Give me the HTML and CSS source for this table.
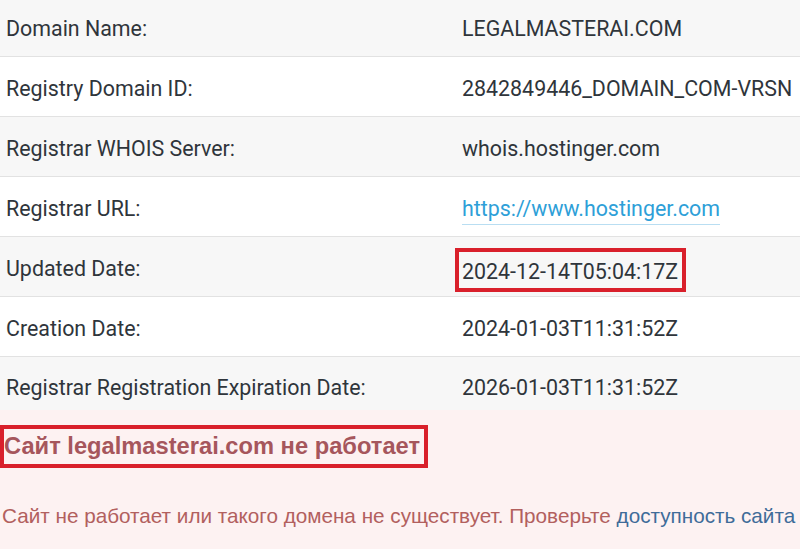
FILE: index.html
```html
<!DOCTYPE html>
<html>
<head>
<meta charset="utf-8">
<link rel="stylesheet" href="styles.css">
</head>
<body>
<div class="whois">
  <div class="row odd first"><div class="label">Domain Name:</div><div class="value">LEGALMASTERAI.COM</div></div>
  <div class="row"><div class="label">Registry Domain ID:</div><div class="value">2842849446_DOMAIN_COM-VRSN</div></div>
  <div class="row odd"><div class="label">Registrar WHOIS Server:</div><div class="value">whois.hostinger.com</div></div>
  <div class="row"><div class="label">Registrar URL:</div><div class="value"><a class="link" href="#">https://www.hostinger.com</a></div></div>
  <div class="row odd"><div class="label">Updated Date:</div><div class="value"><span class="mark">2024-12-14T05:04:17Z</span></div></div>
  <div class="row"><div class="label">Creation Date:</div><div class="value">2024-01-03T11:31:52Z</div></div>
  <div class="row odd last"><div class="label">Registrar Registration Expiration Date:</div><div class="value">2026-01-03T11:31:52Z</div></div>
</div>
<div class="status">
  <h2 class="status-title">Сайт legalmasterai.com не работает</h2>
  <p class="status-text">Сайт не работает или такого домена не существует. Проверьте <a class="check" href="#">доступность сайта</a></p>
</div>
</body>
</html>
```

FILE: styles.css
```css
* { box-sizing: border-box; }
html, body { margin: 0; padding: 0; }
body { width: 800px; height: 549px; overflow: hidden; background: #fff; }
.whois {
  font-family: Roboto, "Liberation Sans", sans-serif;
  font-size: 21.4px;
  color: #2f353b;
  margin-top: -3px;
}
.row {
  display: grid;
  grid-template-columns: 456px 1fr;
  height: 60px;
  align-items: center;
  padding-top: 3px;
  border-bottom: 1px solid #e2e2e2;
  background: #fff;
}
.row.odd { background: #f7f7f7; }
.row.last { height: 53px; border-bottom: none; align-items: start; padding-top: 18px; }
.label { padding-left: 6px; white-space: nowrap; }
.value { padding-left: 6px; white-space: nowrap; }
.link {
  color: #2e9fd8;
  text-decoration: none;
  border-bottom: 1px solid #b9def2;
  padding-bottom: 3px;
}
.mark {
  display: inline-block;
  border: 4px solid #d9202b;
  padding: 4px 4px 1px 3px;
  margin-left: -7px;
  margin-top: 3px;
  line-height: 31px;
}
.status {
  background: #fdf2f2;
  height: 139px;
  padding-top: 15px;
  font-family: "Liberation Sans", Arial, sans-serif;
}
.status-title {
  display: inline-block;
  margin: 0;
  font-size: 23.7px;
  font-weight: bold;
  color: #a6565c;
  border: 4px solid #d9202b;
  padding: 3px 4px 4px 0;
  line-height: 28px;
}
.status-text {
  margin: 36px 0 0 2px;
  font-size: 20.7px;
  color: #b2605e;
  white-space: nowrap;
}
.check { color: #3f6c99; text-decoration: none; }
```
